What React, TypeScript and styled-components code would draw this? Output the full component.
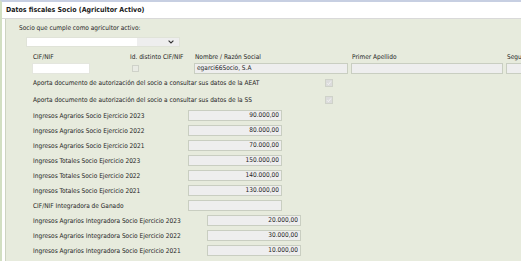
import React from 'react'
import styled, { createGlobalStyle } from 'styled-components'

const GlobalStyle = createGlobalStyle`
  html, body {
    margin: 0;
    padding: 0;
    background: #ffffff;
  }
  body {
    font-family: 'DejaVu Sans Condensed', 'DejaVu Sans', sans-serif;
    font-stretch: condensed;
    font-size: 6.5px;
    color: #1e1e1e;
  }
`

const Page = styled.div`
  width: 521px;
  height: 261px;
  overflow: hidden;
  box-sizing: border-box;
  border-top: 2px solid #c7cfe2;
  border-left: 2px solid #d2dfc2;
  background: #ffffff;
`

const Header = styled.div`
  height: 16px;
  display: flex;
  align-items: center;
  padding-left: 4px;
  font-weight: bold;
  font-size: 7px;
  color: #1a1a1a;
  border-bottom: 1px solid #d9d9d9;
`

const Panel = styled.div`
  margin-left: 3px;
  height: 260px;
  box-sizing: border-box;
  padding-top: 4px;
  background: #e7ebdd;
  border-left: 1px solid #ccd3c0;
`

const Prompt = styled.div`
  height: 10px;
  line-height: 10px;
  padding-left: 13px;
  white-space: nowrap;
`

const Select = styled.div`
  margin: 4px 0 0 20px;
  width: 154px;
  height: 10px;
  display: flex;
  box-sizing: border-box;
  border: 1px solid #e0e3d8;
`

const SelectValue = styled.div`
  flex: 1;
  background: #ffffff;
`

const SelectButton = styled.div`
  width: 42px;
  background: #eeeeee;
  display: flex;
  align-items: center;
  justify-content: flex-end;
  padding-right: 5px;
  box-sizing: border-box;
`

const FieldRow = styled.div`
  display: flex;
  margin: 5px 0 0 26px;
`

const Field = styled.div<{ $w: number; $ml?: number }>`
  width: ${(p) => p.$w}px;
  margin-left: ${(p) => p.$ml ?? 0}px;
  flex-shrink: 0;
  display: flex;
  flex-direction: column;
`

const FieldLabel = styled.div`
  height: 10px;
  line-height: 10px;
  padding-left: 1px;
  white-space: nowrap;
  overflow: hidden;
`

const TextBox = styled.div<{ $white?: boolean; $align?: string }>`
  margin-top: 1px;
  height: 11px;
  box-sizing: border-box;
  background: ${(p) => (p.$white ? '#ffffff' : '#eeeeee')};
  border: 1px solid ${(p) => (p.$white ? '#e4e6de' : '#c9cec1')};
  line-height: 9px;
  padding: 0 2px;
  text-align: ${(p) => p.$align ?? 'left'};
  white-space: nowrap;
  overflow: hidden;
  color: #1e1e1e;
`

const Check = styled.div<{ $checked?: boolean }>`
  width: 7px;
  height: 7px;
  box-sizing: border-box;
  border: 1px solid #cfd2c9;
  background: ${(p) => (p.$checked ? '#dcdcdc' : '#e9ebe4')};
  display: flex;
  align-items: center;
  justify-content: center;
`

const CheckCell = styled.div`
  margin: 3px 0 0 3px;
`

const AuthRow = styled.div`
  height: 17px;
  display: grid;
  grid-template-columns: 292px 8px;
  align-items: center;
  padding-left: 27px;
  white-space: nowrap;
`

const AuthCheck = styled(Check)`
  width: 8px;
  height: 8px;
`

const AmountRow = styled.div<{ $label: number }>`
  height: 15px;
  display: grid;
  grid-template-columns: ${(p) => p.$label}px 94px;
  align-items: center;
  padding-left: 27px;
  white-space: nowrap;
`

const AmountBox = styled(TextBox)`
  margin-top: 0;
`

const Tick = () => (
  <svg width="6" height="6" viewBox="0 0 6 6">
    <path d="M1 3.2 L2.4 4.6 L5 1.4" fill="none" stroke="#f4f4f4" strokeWidth="1" />
  </svg>
)

const Chevron = () => (
  <svg width="6" height="4" viewBox="0 0 6 4">
    <path d="M0.6 0.6 L3 3 L5.4 0.6" fill="none" stroke="#333" strokeWidth="1.1" />
  </svg>
)

const amounts = [
  { label: 'Ingresos Agrarios Socio Ejercicio 2023', value: '90.000,00', w: 155 },
  { label: 'Ingresos Agrarios Socio Ejercicio 2022', value: '80.000,00', w: 155 },
  { label: 'Ingresos Agrarios Socio Ejercicio 2021', value: '70.000,00', w: 155 },
  { label: 'Ingresos Totales Socio Ejercicio 2023', value: '150.000,00', w: 155 },
  { label: 'Ingresos Totales Socio Ejercicio 2022', value: '140.000,00', w: 155 },
  { label: 'Ingresos Totales Socio Ejercicio 2021', value: '130.000,00', w: 155 },
  { label: 'CIF/NIF Integradora de Ganado', value: '', w: 155 },
  { label: 'Ingresos Agrarios Integradora Socio Ejercicio 2023', value: '20.000,00', w: 174 },
  { label: 'Ingresos Agrarios Integradora Socio Ejercicio 2022', value: '30.000,00', w: 174 },
  { label: 'Ingresos Agrarios Integradora Socio Ejercicio 2021', value: '10.000,00', w: 174 },
]

export default function App() {
  return (
    <>
      <GlobalStyle />
      <Page>
        <Header>Datos fiscales Socio (Agricultor Activo)</Header>
        <Panel>
          <Prompt>Socio que cumple como agricultor activo:</Prompt>
          <Select>
            <SelectValue />
            <SelectButton>
              <Chevron />
            </SelectButton>
          </Select>

          <FieldRow>
            <Field $w={58}>
              <FieldLabel>CIF/NIF</FieldLabel>
              <TextBox $white />
            </Field>
            <Field $w={63} $ml={39}>
              <FieldLabel>Id. distinto CIF/NIF</FieldLabel>
              <CheckCell>
                <Check />
              </CheckCell>
            </Field>
            <Field $w={154} $ml={2}>
              <FieldLabel>Nombre / Razón Social</FieldLabel>
              <TextBox>egarci66Socio, S.A</TextBox>
            </Field>
            <Field $w={152} $ml={3}>
              <FieldLabel>Primer Apellido</FieldLabel>
              <TextBox />
            </Field>
            <Field $w={152} $ml={3}>
              <FieldLabel>Segundo Apellido</FieldLabel>
              <TextBox />
            </Field>
          </FieldRow>

          <AuthRow>
            <span>Aporta documento de autorización del socio a consultar sus datos de la AEAT</span>
            <AuthCheck $checked>
              <Tick />
            </AuthCheck>
          </AuthRow>
          <AuthRow>
            <span>Aporta documento de autorización del socio a consultar sus datos de la SS</span>
            <AuthCheck $checked>
              <Tick />
            </AuthCheck>
          </AuthRow>

          {amounts.map((a) => (
            <AmountRow key={a.label} $label={a.w}>
              <span>{a.label}</span>
              <AmountBox $align="right">{a.value}</AmountBox>
            </AmountRow>
          ))}
        </Panel>
      </Page>
    </>
  )
}
